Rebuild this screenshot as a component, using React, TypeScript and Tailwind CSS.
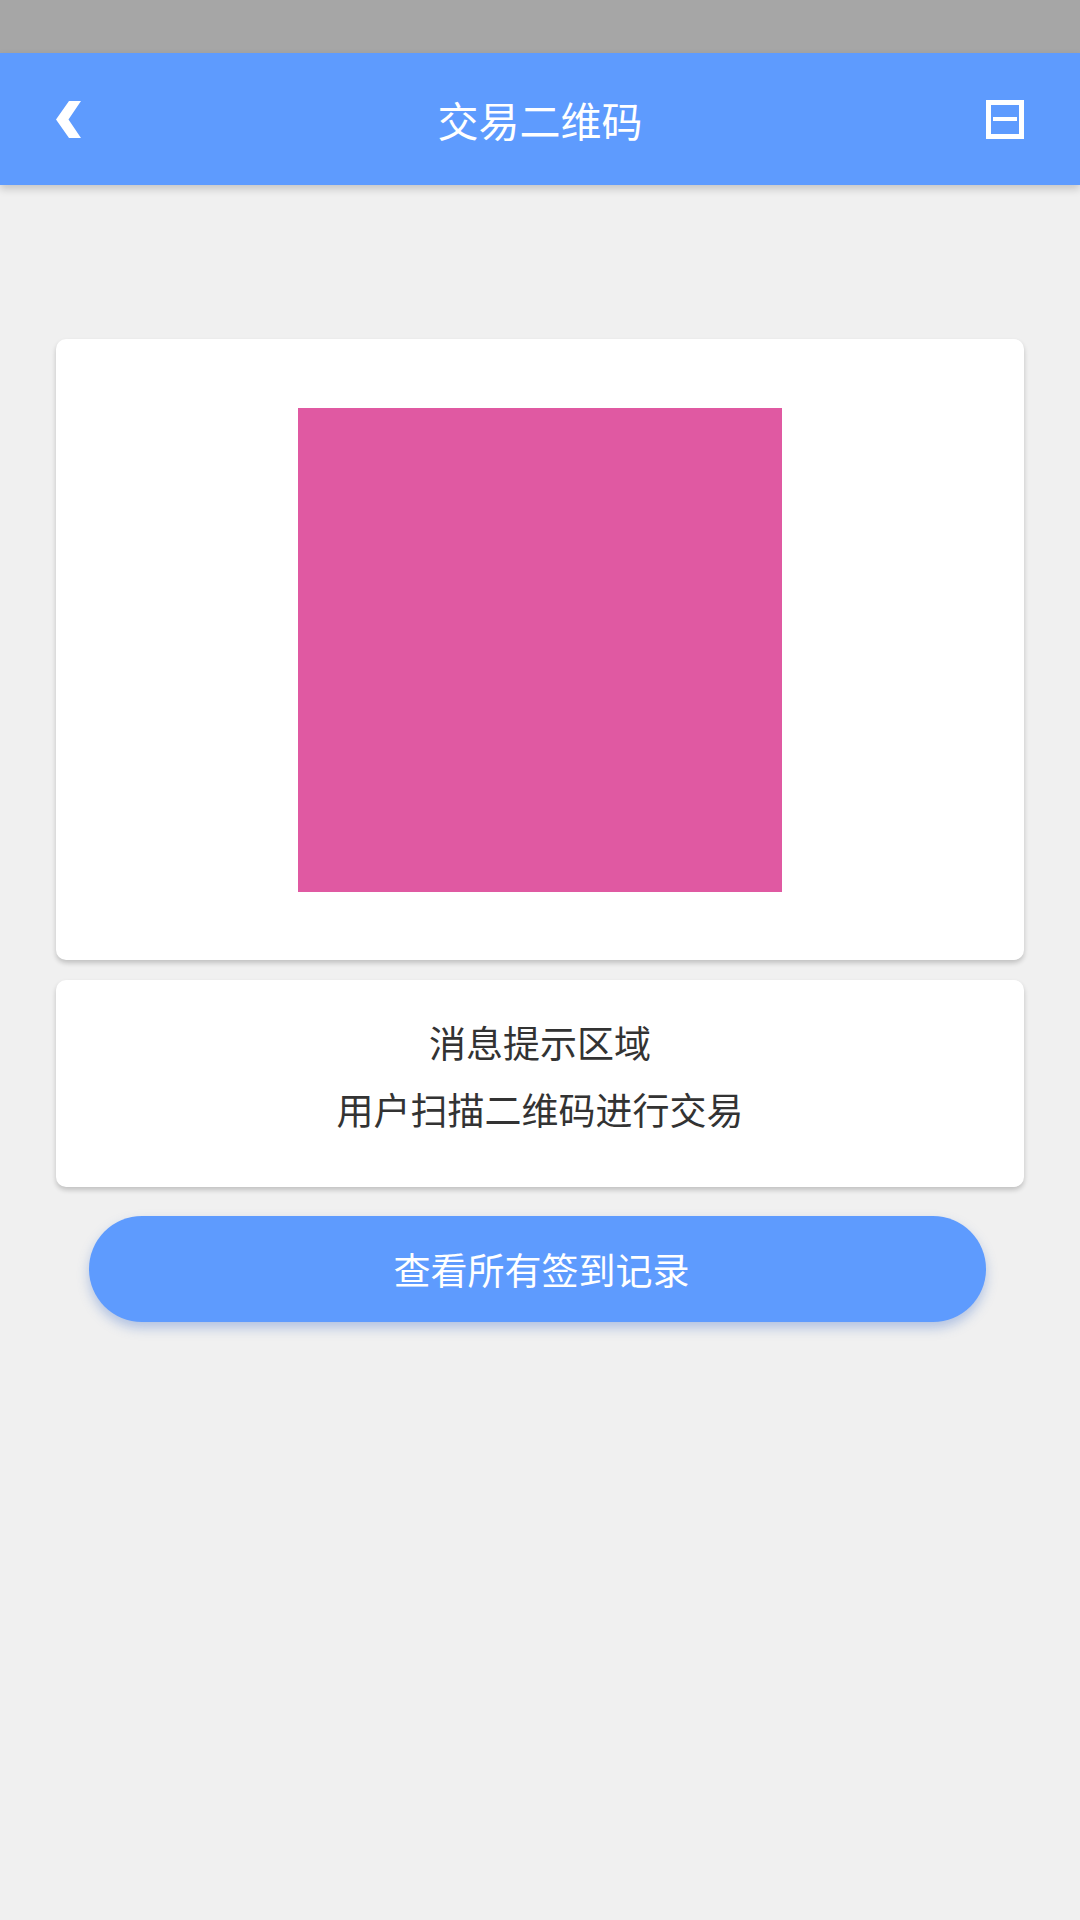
export default function App() {
  return (
    <div
      className="w-[1080px] h-[1920px] bg-[#f0f0f0] flex flex-col"
      style={{ fontFamily: '"Noto Sans CJK SC", "Noto Sans", sans-serif' }}
    >
      {/* status bar */}
      <div className="h-[53px] bg-[#a6a6a6]" />

      {/* header */}
      <div className="relative z-10 h-[132px] bg-[#5e9bfe] flex items-center px-[56px] shadow-[0_4px_8px_rgba(0,0,0,0.18)]">
        <div className="w-[120px] flex justify-start">
          <svg width="25" height="37" viewBox="0 0 25 37">
            <polygon points="13,0 25,0 12.5,18.5 25,37 13,37 0,18.5" fill="#ffffff" />
          </svg>
        </div>
        <div className="flex-1 text-center text-white text-[41px] leading-none">交易二维码</div>
        <div className="w-[120px] flex justify-end">
          <div className="w-[38px] h-[39px] border-[5px] border-white flex items-center justify-center">
            <div className="w-[24px] h-[4px] bg-white" />
          </div>
        </div>
      </div>

      {/* qr card */}
      <div className="mt-[154px] mx-[56px] bg-white rounded-[10px] shadow-[0_3px_5px_rgba(0,0,0,0.2)] pt-[69px] pb-[68px] flex justify-center">
        <div className="w-[484px] h-[484px] bg-[#e059a2]" />
      </div>

      {/* message card */}
      <div className="mt-[20px] mx-[56px] h-[207px] bg-white rounded-[10px] shadow-[0_3px_5px_rgba(0,0,0,0.2)] flex flex-col items-center justify-center gap-[30px] text-[#333333] text-[37px] leading-[37px] pb-[16px]">
        <div>消息提示区域</div>
        <div>用户扫描二维码进行交易</div>
      </div>

      {/* button */}
      <div className="mt-[29px] ml-[89px] mr-[94px] h-[106px] rounded-full bg-[#5e9bfe] flex items-center justify-center pl-[8px] text-white text-[37px] leading-none shadow-[0_6px_12px_rgba(60,110,200,0.35)]">
        查看所有签到记录
      </div>
    </div>
  );
}
